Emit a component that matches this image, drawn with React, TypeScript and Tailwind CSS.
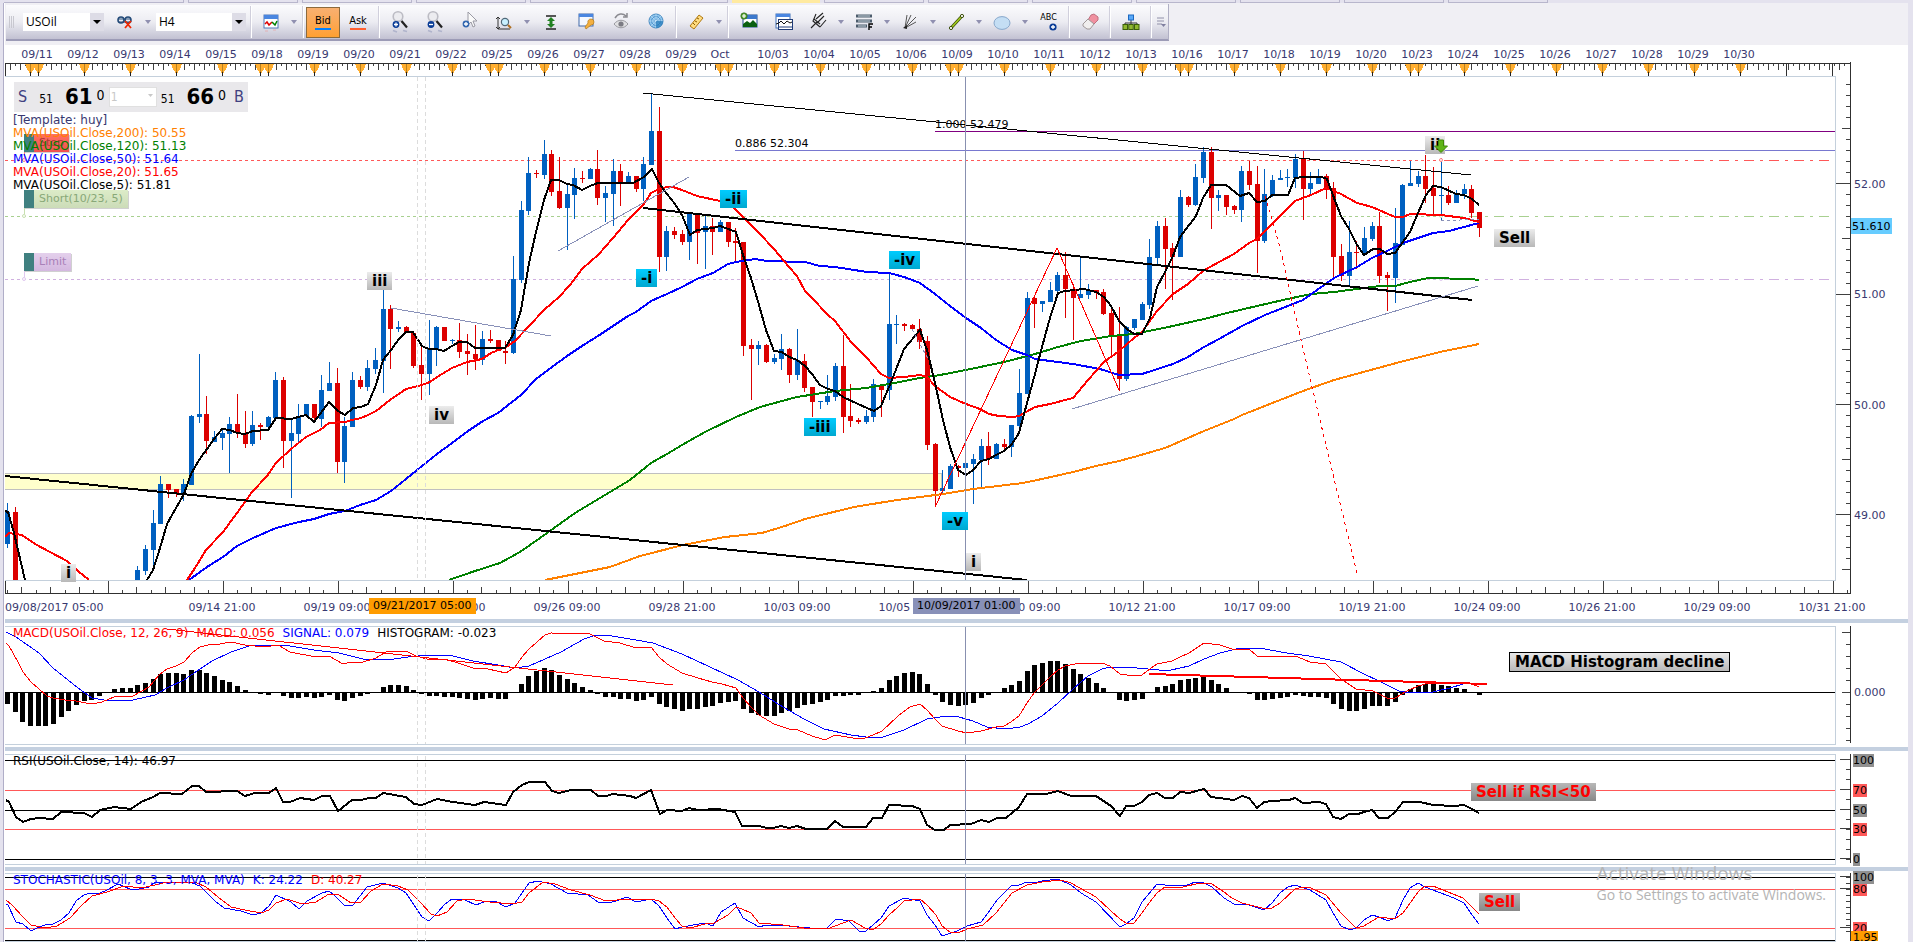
import { type ReactNode } from 'react';

type Candle = [number, number, number, number, number, 0 | 1];

// bar index, high, body top, body bottom, low, 1 = bullish
const candles: Candle[] = [
  [0, 503, 512, 544, 548, 1], [1, 507, 512, 590, 590, 0], [17, 566, 570, 585, 585, 1], [18, 545, 549, 571, 575, 1],
  [19, 510, 523, 550, 569, 1], [20, 476, 484, 524, 524, 1], [21, 484, 484, 490, 498, 0], [22, 489, 489, 493, 497, 0],
  [23, 479, 484, 493, 501, 1], [24, 415, 416, 485, 485, 1], [25, 354, 414, 417, 423, 1], [26, 396, 414, 441, 454, 0],
  [27, 431, 437, 442, 442, 1], [28, 428, 433, 438, 450, 1], [29, 417, 424, 434, 473, 1], [30, 394, 424, 433, 438, 0],
  [31, 411, 433, 444, 448, 0], [32, 411, 425, 444, 446, 1], [33, 423, 425, 427, 440, 0], [34, 416, 417, 427, 430, 1],
  [35, 372, 380, 418, 418, 1], [36, 377, 380, 441, 468, 0], [37, 418, 433, 441, 498, 1], [38, 404, 416, 434, 443, 1],
  [39, 404, 404, 416, 416, 1], [40, 404, 404, 418, 420, 0], [41, 375, 390, 419, 427, 1], [42, 362, 383, 391, 391, 1],
  [43, 368, 383, 462, 473, 0], [44, 417, 426, 462, 483, 1], [45, 372, 380, 427, 427, 1], [46, 376, 380, 387, 389, 0],
  [47, 360, 368, 387, 391, 1], [48, 348, 360, 369, 374, 1], [49, 290, 309, 361, 393, 1], [50, 305, 309, 329, 369, 0],
  [51, 321, 327, 329, 332, 1], [52, 326, 327, 333, 333, 0], [53, 332, 333, 366, 368, 0], [54, 347, 365, 374, 400, 0],
  [55, 320, 349, 374, 395, 1], [56, 326, 327, 349, 366, 1], [57, 327, 327, 341, 341, 0], [58, 339, 340, 341, 344, 1],
  [59, 323, 340, 352, 358, 0], [60, 334, 351, 354, 375, 0], [61, 325, 354, 359, 370, 0], [62, 331, 339, 360, 365, 1],
  [63, 330, 339, 341, 343, 0], [64, 340, 340, 351, 351, 0], [65, 341, 351, 353, 364, 0], [66, 256, 279, 353, 354, 1],
  [67, 201, 210, 280, 283, 1], [68, 157, 173, 211, 215, 1], [69, 170, 173, 174, 178, 0], [70, 140, 154, 175, 179, 1],
  [71, 150, 154, 192, 196, 0], [72, 157, 191, 208, 209, 0], [73, 185, 194, 208, 250, 1], [74, 168, 178, 195, 219, 1],
  [75, 171, 178, 179, 183, 0], [76, 168, 169, 179, 179, 1], [77, 150, 169, 198, 205, 0], [78, 186, 193, 198, 222, 1],
  [79, 159, 171, 194, 226, 1], [80, 164, 171, 183, 206, 0], [81, 172, 176, 183, 183, 1], [82, 176, 176, 189, 192, 0],
  [83, 157, 164, 189, 201, 1], [84, 93, 131, 165, 165, 1], [85, 107, 131, 257, 272, 0], [86, 226, 231, 257, 271, 1],
  [87, 227, 231, 235, 239, 0], [88, 230, 234, 242, 245, 0], [89, 213, 214, 242, 260, 1], [90, 214, 214, 233, 264, 0],
  [91, 216, 226, 232, 269, 1], [92, 218, 226, 232, 255, 0], [93, 220, 222, 232, 232, 1], [94, 222, 222, 242, 247, 0],
  [95, 228, 241, 243, 261, 0], [96, 242, 242, 346, 356, 0], [97, 339, 345, 349, 400, 0], [98, 341, 345, 349, 365, 1],
  [99, 344, 345, 362, 363, 0], [100, 354, 358, 362, 364, 1], [101, 334, 349, 359, 370, 1], [102, 348, 349, 375, 383, 0],
  [103, 329, 360, 375, 380, 1], [104, 354, 361, 388, 392, 0], [105, 387, 387, 402, 417, 0], [106, 401, 401, 402, 409, 1],
  [107, 375, 396, 402, 405, 1], [108, 363, 366, 397, 401, 1], [109, 335, 366, 417, 433, 0], [110, 384, 416, 421, 427, 0],
  [111, 418, 420, 422, 424, 0], [112, 410, 416, 422, 424, 1], [113, 379, 384, 417, 422, 1], [114, 384, 385, 390, 417, 0],
  [115, 274, 324, 390, 400, 1], [116, 315, 324, 325, 344, 1], [117, 323, 324, 326, 331, 0], [118, 324, 325, 329, 329, 0],
  [119, 319, 329, 342, 349, 0], [120, 336, 341, 445, 450, 0], [121, 443, 444, 491, 507, 0], [122, 470, 488, 491, 495, 1],
  [123, 464, 466, 489, 489, 1], [124, 465, 466, 468, 477, 0], [125, 463, 463, 468, 468, 1], [126, 454, 459, 464, 504, 1],
  [127, 439, 446, 460, 488, 1], [128, 432, 446, 459, 465, 0], [129, 443, 444, 459, 459, 1], [130, 439, 444, 447, 451, 0],
  [131, 425, 425, 447, 457, 1], [132, 369, 393, 426, 428, 1], [133, 292, 298, 394, 394, 1], [134, 295, 298, 304, 328, 0],
  [135, 301, 301, 304, 312, 1], [136, 282, 290, 302, 302, 1], [137, 272, 275, 291, 293, 1], [138, 252, 275, 289, 318, 0],
  [139, 284, 289, 298, 340, 0], [140, 257, 294, 298, 298, 1], [141, 284, 290, 295, 299, 1], [142, 290, 290, 292, 299, 0],
  [143, 289, 292, 314, 315, 0], [144, 306, 313, 335, 355, 0], [145, 307, 335, 379, 391, 0], [146, 326, 327, 379, 381, 1],
  [147, 319, 319, 328, 330, 1], [148, 302, 304, 320, 320, 1], [149, 239, 257, 305, 309, 1], [150, 221, 226, 258, 266, 1],
  [151, 218, 226, 249, 289, 0], [152, 243, 248, 257, 300, 0], [153, 190, 197, 257, 257, 1], [154, 196, 197, 205, 207, 0],
  [155, 164, 177, 205, 206, 1], [156, 147, 152, 178, 183, 1], [157, 147, 152, 198, 229, 0], [158, 190, 195, 198, 211, 1],
  [159, 195, 195, 207, 215, 0], [160, 205, 206, 210, 214, 0], [161, 166, 171, 210, 222, 1], [162, 161, 171, 185, 190, 0],
  [163, 166, 184, 241, 273, 0], [164, 169, 194, 241, 243, 1], [165, 175, 180, 195, 197, 1], [166, 170, 178, 180, 180, 1],
  [167, 169, 177, 178, 187, 1], [168, 154, 159, 178, 188, 1], [169, 151, 159, 189, 220, 0], [170, 172, 183, 189, 194, 1],
  [171, 169, 176, 184, 184, 1], [172, 174, 176, 190, 199, 0], [173, 182, 188, 257, 279, 0], [174, 244, 256, 276, 281, 0],
  [175, 221, 252, 276, 286, 1], [176, 241, 252, 253, 269, 0], [177, 227, 238, 253, 253, 1], [178, 222, 226, 239, 241, 1],
  [179, 212, 226, 276, 283, 0], [180, 272, 275, 278, 311, 0], [181, 208, 243, 278, 303, 1], [182, 184, 185, 245, 245, 1],
  [183, 161, 183, 186, 186, 1], [184, 171, 176, 184, 187, 1], [185, 155, 176, 189, 203, 0], [186, 167, 188, 196, 215, 0],
  [187, 158, 195, 196, 221, 1], [188, 186, 195, 203, 205, 0], [189, 190, 194, 203, 203, 1], [190, 184, 189, 194, 199, 1],
  [191, 185, 189, 213, 218, 0], [192, 212, 212, 228, 237, 0],
];

const histogram = [
  -11, -19, -29, -33, -33, -33, -31, -24, -18, -12, -8, -7, -3, 0, 4, 5, 5, 8, 10, 14, 19, 20, 20, 19, 23, 23, 20, 17, 13,
  11, 7, 3, 0, -1, -2, 0, -3, -5, -5, -4, -5, -4, -2, -7, -8, -5, -3, -1, 0, 6, 8, 8, 7, 3, -1, -3, -3, -4, -4, -5, -6, -7,
  -6, -5, -6, -6, 0, 9, 17, 22, 25, 23, 18, 14, 10, 6, 3, -1, -4, -4, -6, -6, -8, -7, -4, -11, -14, -16, -18, -16, -16,
  -14, -13, -10, -9, -8, -16, -20, -22, -23, -23, -20, -18, -15, -12, -11, -9, -7, -3, -3, -2, -2, 0, 2, 5, 13, 17, 20,
  21, 19, 9, -2, -9, -12, -13, -12, -10, -5, -2, 1, 5, 8, 12, 22, 28, 30, 32, 32, 29, 24, 19, 15, 10, 5, 0, -7, -8, -7,
  -6, 0, 6, 7, 9, 13, 14, 15, 17, 13, 9, 5, 0, 0, -1, -7, -7, -6, -5, -4, -2, -3, -4, -4, -5, -11, -16, -18, -18, -16,
  -13, -13, -13, -9, -2, 4, 8, 9, 9, 8, 7, 5, 4, 0, -2,
];

const mva5 = [
  '5,511 8,512 14,533 25,580',
  '147,580 153,570 160,548 167,524 176,508 184,494 191,474 199,460 207,449 214,439 222,429 230,430 237,433 245,434 253,431 268,430 276,418 291,419 306,415 314,422 329,402 338,411 345,415 353,408 361,407 368,404 376,385 383,360 391,350 399,339 406,332 413,332 422,346 429,349 436,349 444,351 452,346 459,342 467,342 475,348 505,348 513,335 521,310 529,263 536,232 544,200 551,180 559,180 567,184 573,185 582,190 590,186 598,183 633,183 644,177 652,169 659,183 667,194 675,204 682,215 690,235 697,230 713,228 720,226 728,229 736,232 743,255 751,278 759,305 766,330 774,351 782,352 789,357 797,360 805,366 812,374 820,385 828,389 835,391 843,397 858,404 874,411 881,406 889,387 897,367 904,349 920,330 927,350 935,383 943,420 950,447 958,470 966,475 973,470 981,461 989,459 996,455 1004,451 1012,444 1019,433 1027,403 1035,374 1042,347 1050,318 1058,293 1065,291 1084,289 1096,292 1104,297 1111,306 1119,321 1127,329 1134,334 1142,334 1150,318 1157,287 1165,272 1173,256 1180,237 1196,216 1203,198 1211,185 1226,185 1240,196 1249,193 1257,202 1265,201 1272,195 1288,195 1295,178 1303,177 1322,177 1327,179 1334,198 1341,216 1349,229 1357,245 1364,255 1373,249 1380,249 1387,254 1395,253 1410,232 1418,213 1426,195 1433,186 1441,187 1456,194 1464,195 1472,199 1479,205',
];
const mva20 = [
  '5,537 9,533 22,535 35,544 50,552 67,561 78,571 89,580',
  '187,580 195,568 206,550 223,532 237,513 252,492 267,476 276,463 291,449 306,437 320,430 329,423 345,422 352,420 361,418 368,415 376,411 390,400 406,389 422,385 430,382 437,377 452,368 467,362 482,359 491,353 506,347 515,341 529,326 544,310 559,297 570,285 582,269 598,255 613,238 628,220 636,212 644,204 651,193 659,189 667,187 673,187 682,190 697,196 720,201 733,207 743,217 759,233 774,249 789,267 797,276 805,291 812,298 828,315 835,321 851,342 866,357 881,374 889,378 904,377 920,375 927,377 935,386 950,397 966,404 980,409 989,414 999,416 1013,417 1019,416 1035,407 1050,404 1073,398 1088,380 1104,362 1119,351 1134,338 1142,332 1157,311 1173,294 1188,284 1203,271 1219,262 1234,254 1249,243 1257,239 1265,231 1280,216 1295,201 1311,195 1326,188 1341,194 1357,203 1372,207 1395,217 1403,217 1410,214 1441,215 1464,218 1479,222',
];
const mva50 =
  '189,580 207,567 223,557 237,546 253,538 276,528 299,522 314,519 329,514 345,511 360,505 376,500 391,491 406,479 422,466 437,454 452,443 468,431 483,421 498,413 521,395 536,379 552,367 567,356 582,346 598,336 613,326 628,316 636,312 651,301 667,294 682,287 697,279 713,273 728,264 736,262 755,259 767,261 805,262 820,266 835,267 867,272 889,273 904,277 920,283 935,294 950,306 966,318 981,328 996,340 1012,350 1027,355 1035,359 1073,364 1100,369 1119,375 1142,374 1173,364 1188,357 1204,347 1219,339 1242,326 1265,315 1303,300 1317,290 1334,278 1357,267 1372,258 1387,251 1403,243 1418,238 1433,233 1449,231 1479,223';
const mva120 =
  '449,580 475,571 500,563 520,552 540,538 575,513 610,492 630,480 651,463 667,454 682,445 705,432 736,417 760,407 782,401 797,397 835,391 866,388 889,384 920,378 940,375 966,370 1004,362 1035,354 1058,347 1081,341 1111,336 1134,334 1173,326 1204,319 1227,313 1257,306 1283,300 1311,294 1334,292 1380,286 1395,286 1410,282 1428,278 1470,279 1479,280';
const mva200 =
  '545,580 580,573 610,567 640,556 683,545 725,537 762,533 785,526 805,519 854,507 897,500 920,497 943,494 973,489 1023,483 1042,479 1073,472 1096,466 1119,461 1134,457 1165,448 1188,438 1204,431 1234,419 1242,415 1280,400 1303,391 1334,380 1367,371 1400,362 1440,352 1479,344';

const macdLine =
  '6,643 9,646 18,662 23,672 31,682 39,689 47,696 53,698 65,700 76,701 86,703 92,704 102,702 114,697 133,696 149,687 159,675 167,669 176,666 184,662 192,653 200,647 208,645 220,644 231,642 245,645 265,647 278,645 290,652 316,657 329,656 343,664 351,662 363,662 376,658 386,652 396,651 406,651 416,656 427,659 445,659 461,664 473,668 488,669 506,673 515,667 522,657 529,649 545,635 551,633 590,634 604,641 620,643 636,648 651,647 659,657 667,664 682,673 698,678 712,682 722,684 736,688 743,698 751,707 759,715 774,724 789,729 798,730 812,736 822,739 827,739 835,735 859,739 865,738 873,735 882,731 898,716 910,707 920,704 927,710 935,719 942,726 958,731 967,733 981,731 996,727 1004,726 1011,722 1019,716 1027,703 1034,693 1042,685 1050,677 1058,670 1065,666 1080,663 1102,663 1110,666 1120,674 1134,676 1142,675 1151,668 1157,664 1172,661 1180,657 1189,653 1204,643 1220,645 1232,649 1249,649 1257,656 1298,657 1310,662 1326,664 1341,679 1356,689 1373,691 1387,698 1395,698 1407,691 1418,686 1429,683 1455,683 1463,682 1470,683 1479,687';
const signalLine =
  '6,632 16,637 39,653 53,668 78,688 92,698 104,700 133,700 155,695 167,688 184,680 200,669 212,661 231,652 249,646 269,645 290,646 314,650 339,653 363,659 394,659 408,657 429,655 449,655 473,661 498,665 515,668 529,666 545,659 561,652 584,639 596,635 612,636 636,640 653,643 682,654 710,667 738,680 759,692 783,707 804,719 824,729 851,735 866,737 883,737 904,730 927,719 946,716 959,717 973,721 987,727 1006,729 1020,727 1028,724 1042,716 1058,703 1073,689 1088,676 1102,669 1110,667 1126,667 1159,670 1171,670 1189,666 1204,659 1220,653 1236,649 1246,648 1259,648 1287,653 1309,656 1341,662 1364,674 1379,681 1399,691 1412,693 1433,692 1450,688 1463,684';
const rsiLine =
  '6,800 9,802 16,817 23,822 31,819 39,818 53,819 61,812 84,813 92,817 100,810 114,807 131,809 141,802 153,797 160,793 182,794 192,786 199,786 206,792 237,791 245,796 255,793 269,793 276,788 283,802 290,802 300,798 314,800 322,796 330,796 338,811 352,800 361,800 369,798 376,798 383,793 406,797 414,804 422,805 437,799 453,802 475,805 484,802 506,805 513,792 522,785 529,782 545,782 552,791 559,793 571,790 591,790 598,796 606,796 613,794 630,796 636,798 651,790 660,814 667,810 682,811 689,808 698,810 718,809 735,812 742,826 759,826 767,828 773,828 781,826 789,828 797,826 806,829 827,829 835,821 843,827 866,827 873,818 882,818 889,805 912,806 920,809 927,825 935,830 944,830 950,825 971,824 981,820 989,822 997,818 1006,818 1019,807 1027,794 1046,794 1058,791 1071,796 1096,796 1111,806 1120,816 1126,806 1134,806 1142,802 1149,795 1157,793 1165,798 1173,798 1180,792 1189,793 1204,789 1211,797 1234,800 1242,796 1249,798 1257,808 1264,802 1272,801 1289,800 1295,798 1303,803 1319,802 1326,804 1333,817 1341,819 1349,814 1358,814 1364,812 1372,810 1379,818 1388,818 1395,812 1403,802 1420,802 1433,805 1454,806 1464,805 1472,809 1479,813';
const stochK =
  '6,904 8,905 16,922 23,924 31,931 37,928 45,925 53,924 61,920 69,913 76,901 84,895 90,893 100,893 107,890 118,884 130,889 139,889 149,887 155,882 176,882 192,883 200,886 215,901 224,908 241,911 253,915 261,913 269,906 276,895 291,902 299,909 307,901 322,893 329,891 335,896 345,906 353,905 367,887 383,883 398,888 406,893 414,905 422,917 429,921 437,913 445,904 452,899 465,900 476,905 486,901 495,901 506,907 515,903 522,893 529,883 538,881 551,884 567,893 588,895 598,902 608,903 616,901 627,897 636,902 651,899 659,906 667,918 675,929 682,927 705,923 713,926 721,912 735,903 743,918 759,927 766,925 789,926 820,929 827,928 836,919 849,921 859,931 866,931 881,918 889,906 904,898 920,901 927,915 935,925 942,936 957,931 967,926 981,922 988,913 997,900 1011,886 1019,885 1027,882 1034,883 1042,881 1058,879 1071,885 1081,893 1096,902 1120,927 1126,924 1134,918 1142,902 1157,884 1165,885 1185,886 1195,882 1204,883 1212,887 1224,898 1234,904 1249,905 1264,910 1272,903 1280,893 1288,887 1295,885 1310,890 1326,900 1333,913 1341,926 1350,930 1356,928 1364,920 1372,915 1379,917 1388,921 1395,918 1403,900 1410,888 1418,883 1425,887 1454,898 1464,903 1472,915 1479,924';
const stochD =
  '6,900 12,905 23,917 31,925 45,928 57,926 70,918 82,905 92,896 107,892 124,886 141,888 155,885 167,882 195,882 206,887 218,897 231,907 245,910 261,913 269,910 276,903 287,899 302,904 316,902 329,894 339,895 351,903 361,902 371,891 383,884 398,886 408,890 420,902 431,914 437,916 447,912 457,901 467,899 490,902 512,904 522,902 529,893 543,882 555,884 571,890 590,895 606,901 628,899 651,899 659,901 667,907 675,918 682,926 690,928 705,924 714,923 728,915 736,907 742,909 751,913 759,923 783,925 804,928 827,929 851,920 865,928 873,930 881,924 889,915 898,907 904,901 920,899 927,905 936,915 942,926 950,932 958,933 967,929 983,925 996,913 1012,893 1027,885 1042,882 1061,880 1071,883 1096,897 1111,911 1120,919 1126,923 1134,923 1142,913 1149,903 1157,893 1165,887 1183,887 1200,883 1212,884 1224,892 1232,898 1242,903 1266,909 1272,908 1280,903 1295,889 1303,887 1311,888 1326,895 1341,913 1356,928 1364,926 1379,917 1395,919 1403,913 1418,892 1425,886 1433,886 1463,898 1472,907 1479,914';

const dayLabels = [
  '09/11', '09/12', '09/13', '09/14', '09/15', '09/18', '09/19', '09/20', '09/21', '09/22', '09/25', '09/26', '09/27',
  '09/28', '09/29', 'Oct', '10/03', '10/04', '10/05', '10/06', '10/09', '10/10', '10/11', '10/12', '10/13', '10/16',
  '10/17', '10/18', '10/19', '10/20', '10/23', '10/24', '10/25', '10/26', '10/27', '10/28', '10/29', '10/30',
];
const timeLabels = [
  '09/14 21:00', '09/19 09:00', '09/21 21:00', '09/26 09:00', '09/28 21:00', '10/03 09:00', '10/05 21:00',
  '10/10 09:00', '10/12 21:00', '10/17 09:00', '10/19 21:00', '10/24 09:00', '10/26 21:00', '10/29 09:00', '10/31 21:00',
];

const LEFT = 5;
const barX = (i: number) => Math.round(7 + i * 7.667);
const range = (n: number) => Array.from({ length: n }, (_, i) => i);

/* ---------- toolbar ---------- */

function Icon({ children }: { children: ReactNode }) {
  return (
    <svg width="20" height="24" viewBox="0 0 20 24" fill="none" aria-hidden="true">
      {children}
    </svg>
  );
}

function Lens({ sign }: { sign: 'plus' | 'minus' }) {
  return (
    <Icon>
      <circle cx="8" cy="6.500" r="4.800" fill="#ececf0" stroke="#bcbcc4" strokeWidth="1.6" />
      <path d="M11.500 11l5.500 6.500" stroke="#222" strokeWidth="2.2" />
      <path d="M3 20.500l4 1.500M13 20.500l4 1" stroke="#8c94b8" strokeWidth="1.6" opacity=".5" />
      <circle cx="6" cy="14.500" r="3.400" fill="#0a3c96" />
      <path d={sign === 'plus' ? 'M4 14.500h4M6 12.500v4' : 'M4 14.500h4'} stroke="#fff" strokeWidth="1.3" />
    </Icon>
  );
}

function ToolButton({ label, children }: { label: string; children: ReactNode }) {
  return (
    <button aria-label={label} className="flex h-9 w-[35px] shrink-0 items-center justify-center">
      {children}
    </button>
  );
}

function SplitButton({ label, children }: { label: string; children: ReactNode }) {
  return (
    <div className="flex h-9 shrink-0">
      <button aria-label={label} className="flex w-[34px] items-center justify-center">
        {children}
      </button>
      <button aria-label={`${label} options`} className="flex w-3 items-center justify-center">
        <svg width="6" height="4" aria-hidden="true">
          <path d="M0 0h6L3 4z" fill="#9090b0" />
        </svg>
      </button>
    </div>
  );
}

function Sep() {
  return (
    <div className="flex h-8 w-[6px] shrink-0 justify-center">
      <div className="w-px bg-[#d0cfdc]" />
      <div className="w-px bg-white" />
    </div>
  );
}

function Combo({ label, value, className }: { label: string; value: string; className: string }) {
  return (
    <div className={`relative h-[18px] shrink-0 bg-white ${className}`}>
      <select
        aria-label={label}
        defaultValue={value}
        className="block h-full w-full appearance-none bg-transparent px-[3px] font-['Open_Sans',sans-serif] text-xs leading-none text-black"
      >
        <option>{value}</option>
      </select>
      <span className="pointer-events-none absolute inset-y-0 right-0 flex w-[14px] items-center justify-center bg-[#dddce6]">
        <svg width="8" height="4" aria-hidden="true">
          <path d="M0 0h8L4 4z" fill="#000" />
        </svg>
      </span>
    </div>
  );
}

function Toolbar() {
  return (
    <div className="bg-[#f0eff4] pb-1">
      <div className="ml-px flex h-9 w-fit items-center border-b-2 border-[#9c9bb6] bg-gradient-to-b from-[#fbfbfd] via-[#ececf2] to-[#c2c1d2]">
        <div className="flex w-[10px] justify-center gap-px">
          <i className="h-3 w-px bg-[#c8c8d0]" />
          <i className="h-3 w-px bg-[#c8c8d0]" />
          <i className="h-3 w-px bg-[#c8c8d0]" />
        </div>
        <Combo label="Instrument" value="USOil" className="ml-[7px] w-[81px]" />
        <div className="ml-1">
          <SplitButton label="Link">
            <Icon>
              <path d="M4 9h12M4 12h12" stroke="#234a78" strokeWidth="1" />
              <circle cx="6" cy="10" r="3" stroke="#234a78" strokeWidth="1.6" />
              <circle cx="13" cy="10" r="3" stroke="#234a78" strokeWidth="1.6" />
              <path d="M10 11l6 7M16 11l-6 7" stroke="#f02800" strokeWidth="1.8" />
            </Icon>
          </SplitButton>
        </div>
        <Combo label="Period" value="H4" className="mx-[2px] w-[90px]" />
        <Sep />
        <SplitButton label="Chart type">
          <Icon>
            <rect x="3" y="5" width="14" height="13" fill="#fff" stroke="#5078b8" />
            <path d="M3 5h14v4H3z" fill="#4a86e0" />
            <path d="M4 14l2-2 2 3 3-3" stroke="#e00000" strokeWidth="1.5" />
            <path d="M11 12l3 3 2-4" stroke="#008000" strokeWidth="1.5" />
            <path d="M4 21h3M12 20h3" stroke="#e8a0a0" opacity=".7" />
          </Icon>
        </SplitButton>
        <Sep />
        <button className="flex h-[31px] w-[34px] shrink-0 flex-col items-center justify-center gap-px border border-[#8c6a3c] bg-gradient-to-b from-[#f8b070] to-[#ffa030] font-['DejaVu_Sans_Condensed','DejaVu_Sans',sans-serif] text-[11px] leading-3 text-black">
          Bid
          <i className="h-[2px] w-4 bg-[#0080ff]" />
        </button>
        <button className="flex h-[31px] w-9 shrink-0 flex-col items-center justify-center gap-px font-['DejaVu_Sans_Condensed','DejaVu_Sans',sans-serif] text-[11px] leading-3 text-black">
          Ask
          <i className="h-[2px] w-4 bg-[#ff6030]" />
        </button>
        <Sep />
        <ToolButton label="Zoom in">
          <Lens sign="plus" />
        </ToolButton>
        <ToolButton label="Zoom out">
          <Lens sign="minus" />
        </ToolButton>
        <ToolButton label="Cursor">
          <Icon>
            <path d="M8 2v13l3-3 2 5 2-1-2-5h4z" fill="#fafafa" stroke="#9a9aa4" />
            <circle cx="6" cy="14" r="3.4" fill="#3468b0" />
            <path d="M4 14h4M6 12v4" stroke="#fff" strokeWidth="1.3" />
          </Icon>
        </ToolButton>
        <SplitButton label="Scale">
          <Icon>
            <path d="M4 7v12M2 9l2-2 2 2M2 17l2 2 2-2M4 19h12" stroke="#333" />
            <circle cx="11" cy="12" r="3.6" fill="#c8f0ff" stroke="#506878" strokeWidth="1.2" />
            <path d="M14 15l3 3" stroke="#b07020" strokeWidth="2" />
          </Icon>
        </SplitButton>
        <ToolButton label="Fit vertically">
          <Icon>
            <path d="M5 6h10M5 19h10" stroke="#222" strokeWidth="1.6" />
            <path d="M10 7l4 4h-2.500v3H14l-4 4-4-4h2.500v-3H6z" fill="#208020" />
          </Icon>
        </ToolButton>
        <ToolButton label="Chart properties">
          <Icon>
            <rect x="3" y="4" width="14" height="12" fill="#f4f8ff" stroke="#4068a8" />
            <path d="M3 4h14v3H3z" fill="#4a86e0" />
            <path d="M15 9a3 3 0 0 1 0 6l-5 4-1-2 3-4a3 3 0 0 1 3-4z" fill="#f4b040" stroke="#b07818" strokeWidth=".7" />
          </Icon>
        </ToolButton>
        <ToolButton label="Show or hide">
          <Icon>
            <path d="M4 8c3-5 8-5 11-2M16 3v4h-4" stroke="#8a8a90" strokeWidth="1.5" />
            <path d="M3 14c4-5 10-5 14 0-4 5-10 5-14 0z" fill="#e0e0e2" stroke="#9a9aa0" />
            <circle cx="10" cy="14" r="2.6" fill="#7c7c84" />
          </Icon>
        </ToolButton>
        <ToolButton label="Web">
          <Icon>
            <circle cx="10" cy="11" r="7" fill="#8cc4ec" stroke="#4488c0" />
            <circle cx="10" cy="11" r="4.500" stroke="#3c84c4" strokeWidth=".8" />
            <circle cx="10" cy="11" r="2" stroke="#3c84c4" strokeWidth=".8" />
            <path d="M10 4v14M3 11h14M5 6l10 10M15 6L5 16" stroke="#c8e4f8" strokeWidth=".6" />
            <path d="M10 11V18a7 7 0 0 0 7-7z" fill="#2078b8" opacity=".7" />
          </Icon>
        </ToolButton>
        <Sep />
        <SplitButton label="Measure">
          <Icon>
            <path d="M13 5l4 3-9 11-4-3z" fill="#ffdc80" stroke="#b07810" />
            <path d="M11 8l2 1M9 11l2 1M7 13l2 2" stroke="#8c5c00" />
          </Icon>
        </SplitButton>
        <Sep />
        <ToolButton label="Add indicator">
          <Icon>
            <rect x="4" y="5" width="14" height="12" fill="#fff" stroke="#204c90" />
            <path d="M4 5h14v4H4z" fill="#3c78cc" />
            <path d="M4 17v-3l4-3 3 2 3-3 4 4v3z" fill="#0a6010" />
            <circle cx="5" cy="6" r="3.2" fill="#58a030" stroke="#206010" strokeWidth=".6" />
            <path d="M3 6h4M5 4v4" stroke="#fff" strokeWidth="1.2" />
          </Icon>
        </ToolButton>
        <ToolButton label="Indicator windows">
          <Icon>
            <rect x="2" y="4" width="14" height="14" fill="#fff" stroke="#4070b8" />
            <path d="M2 4h14v3H2z" fill="#4a86e0" />
            <rect x="4.500" y="9.500" width="14" height="10" fill="#fff" stroke="#203c78" />
            <path d="M2 14l3-1 2-2 3 3 3-3 3 2 2-1" stroke="#111" />
            <path d="M5 17h13" stroke="#203c78" />
          </Icon>
        </ToolButton>
        <SplitButton label="Pitchfork">
          <Icon>
            <path d="M3 18L9 12M8 4l-3 7 7 6M8 9l7-6M9 13l7-7M12 17l6-7M6 9l6 5" stroke="#222" strokeWidth="1.1" />
          </Icon>
        </SplitButton>
        <SplitButton label="Fibonacci">
          <Icon>
            <path d="M2 6h16M2 11h16M2 16h11" stroke="#4c5c6c" strokeWidth="3" />
            <path d="M4 6h12M4 11h12M4 16h8" stroke="#c8d4dc" strokeWidth="1" />
            <path d="M15 20v-6h4M15 17h3" stroke="#000" strokeWidth="1.4" />
          </Icon>
        </SplitButton>
        <SplitButton label="Fan">
          <Icon>
            <path d="M5 18l2-13M5 18l6-13M5 18L16 7M5 18l11-6" stroke="#555" />
            <path d="M3 18l4-3v4z" fill="#222" />
          </Icon>
        </SplitButton>
        <SplitButton label="Line">
          <Icon>
            <path d="M5 18L16 6" stroke="#384c08" strokeWidth="3" />
            <path d="M5 18L16 6" stroke="#a4cc20" strokeWidth="1.6" />
            <circle cx="16" cy="6" r="1.600" fill="#fff" stroke="#384c08" />
            <circle cx="5" cy="18" r="1.600" fill="#fff" stroke="#384c08" />
          </Icon>
        </SplitButton>
        <SplitButton label="Ellipse">
          <Icon>
            <ellipse cx="10" cy="13" rx="8" ry="6.400" fill="#c4def4" stroke="#88a8cc" />
          </Icon>
        </SplitButton>
        <button className="flex h-9 w-[35px] shrink-0 flex-col items-center justify-center font-['DejaVu_Sans_Condensed','DejaVu_Sans',sans-serif] text-[9px] leading-[9px] text-black">
          ABC
          <svg width="10" height="10" className="ml-2" aria-hidden="true">
            <circle cx="5" cy="5" r="3.600" fill="#0a3c96" />
            <path d="M3 5h4M5 3v4" stroke="#fff" strokeWidth="1.300" />
          </svg>
        </button>
        <Sep />
        <ToolButton label="Erase">
          <Icon>
            <path d="M11 5l3-1 4 3v3l-4 4-6-4z" fill="#f090a0" stroke="#c07080" />
            <path d="M8 9l6 5-4 5H7l-4-3v-2z" fill="#f0eeee" stroke="#a09898" />
          </Icon>
        </ToolButton>
        <Sep />
        <ToolButton label="Objects tree">
          <Icon>
            <path d="M10 8v7M4 15v-2h12v2" stroke="#333" />
            <rect x="7.500" y="5" width="5" height="5" fill="#58a8f8" stroke="#1c68c0" />
            <rect x="2" y="14.500" width="4.500" height="5" fill="#90b830" stroke="#3c6008" />
            <rect x="7.750" y="14.500" width="4.500" height="5" fill="#90b830" stroke="#3c6008" />
            <rect x="13.500" y="14.500" width="4.500" height="5" fill="#90b830" stroke="#3c6008" />
          </Icon>
        </ToolButton>
        <Sep />
        <button aria-label="More tools" className="flex h-9 w-[15px] items-center justify-center border-r border-[#b0afc4]">
          <svg width="10" height="12" aria-hidden="true">
            <path d="M1 2h7M1 5h7M1 8h5" stroke="#9090a8" />
            <path d="M5 8h5l-2.500 3z" fill="#8080a0" />
          </svg>
        </button>
      </div>
    </div>
  );
}

/* ---------- chart pieces ---------- */

const axisText = "font-['DejaVu_Sans',sans-serif] text-[11px]";
const legendText = "font-['DejaVu_Sans',sans-serif] text-xs leading-[13px]";

function DayRuler() {
  const weekends = [30, 260, 490, 720, 950, 1180, 1410];
  const days = dayLabels.map((_, i) => (i === 15 ? 728 : 38 + i * 46));
  return (
    <svg className={`block h-[31px] w-full ${axisText}`} shapeRendering="crispEdges">
      <g transform={`translate(${-LEFT},-45)`}>
        {range(361).map((i) => (
          <path key={i} d={`M${Math.round(10 + i * 5.11)}.5 63v${i % 2 ? 3 : 7}`} stroke="#404040" />
        ))}
        {[...weekends, ...days].map((x) => (
          <g key={x}>
            <path d={`M${x - 5} 64h11l-2 5-3.500 5-3.500-5z`} fill="#ffae30" />
            <path d={`M${x + 0.5} 64v8`} stroke="#b88020" />
            <path d={`M${x + 0.5} 72v4`} stroke="#202020" />
          </g>
        ))}
        <path d="M5.500 63v14M1786.500 63v13M1832.500 63v13" stroke="#303030" />
        {dayLabels.map((d, i) => (
          <text key={d} x={i === 15 ? 720 : 37 + i * 46} y="58" textAnchor="middle" fill="#383870">
            {d}
          </text>
        ))}
      </g>
      <line x1="0" y1="18.500" x2="100%" y2="18.500" stroke="#303030" />
    </svg>
  );
}

function TimeAxis() {
  return (
    <div className="relative mr-[57px]">
      <svg className={`block h-[38px] w-full overflow-visible ${axisText}`} shapeRendering="crispEdges">
        <g transform={`translate(${-LEFT},-581)`}>
          {range(129).map((i) => (
            <path
              key={i}
              d={`M${Math.round(7 + i * 14.375)}.5 593v${(i - 7) % 8 === 0 ? -12 : i % 2 ? -6 : -3}`}
              stroke="#404040"
            />
          ))}
          <path d="M5.500 581v13" stroke="#303030" />
          <text x="5" y="611" fill="#383870">
            09/08/2017 05:00
          </text>
          {timeLabels.map((t, i) => (
            <text key={t} x={222 + i * 115} y="611" textAnchor="middle" fill="#383870">
              {t}
            </text>
          ))}
        </g>
        <line x1="0" y1="12.500" x2="100%" y2="12.500" stroke="#303030" />
      </svg>
      <span className={`absolute top-[17px] left-[364px] bg-[#ff9c00] px-1 leading-4 whitespace-nowrap text-black ${axisText}`}>
        09/21/2017 05:00
      </span>
      <span className={`absolute top-[17px] left-[908px] bg-[#8890b8] px-1 leading-4 whitespace-nowrap text-black ${axisText}`}>
        10/09/2017 01:00
      </span>
    </div>
  );
}

function Guides() {
  return (
    <g shapeRendering="crispEdges">
      <path d="M417.500 0V1000M425.500 0V1000" stroke="#dcdcdc" strokeDasharray="4 3" />
      <path d="M965.500 0V1000" stroke="#8890b0" />
    </g>
  );
}

function Pane({ top, height, axis, children, overlay }: {
  top: number;
  height: string;
  axis: ReactNode;
  children: ReactNode;
  overlay?: ReactNode;
}) {
  return (
    <section className="flex">
      <div className="relative min-w-0 flex-1 border-y border-r border-[#c4d0dc]">
        <svg className={`block w-full overflow-hidden ${height} ${axisText}`}>
          <g transform={`translate(${-LEFT},${-top})`}>
            {children}
            <Guides />
          </g>
        </svg>
        {overlay}
      </div>
      <div className="w-[72px] shrink-0">
        <svg className={`block w-full overflow-visible ${height} ${axisText}`} shapeRendering="crispEdges">
          <g transform={`translate(-1836,${-top})`}>{axis}</g>
        </svg>
      </div>
    </section>
  );
}

function Splitter() {
  return <div className="h-[4px] bg-[#c4d0e0]" />;
}

type NoteProps = { x: number; y: number; top: number; tone?: string; children: ReactNode };

function Note({ x, y, top, tone = 'from-[#ececec] to-[#b8b8b8] text-black', children }: NoteProps) {
  return (
    <span
      className={`absolute bg-gradient-to-b px-[5px] font-['DejaVu_Sans',sans-serif] text-[15px] leading-[18px] font-bold whitespace-nowrap ${tone}`}
      style={{ left: x - LEFT, top: y - top }}
    >
      {children}
    </span>
  );
}

const cyan = 'from-[#00ccff] to-[#00a8d0] text-black';

function Quote({ side, whole, pips }: { side: string; whole: string; pips: string }) {
  return (
    <span className="flex items-center gap-3 text-black">
      {side === 'S' && <b className="text-base font-normal text-[#404080]">S</b>}
      <span className="pt-1 text-xs">{whole}</span>
      <span className="flex items-start gap-1">
        <b className="text-[22px] leading-7">{pips}</b>
        <sup className="top-0 pt-1 text-sm leading-4">0</sup>
      </span>
      {side === 'B' && <b className="-ml-1 text-base font-normal text-[#404080]">B</b>}
    </span>
  );
}

const tags = [
  { text: 'Stop', y: 134, body: 'from-[#ff7060] to-[#f05050] text-[#b03838]' },
  { text: 'Short(10/23, 5)', y: 190, body: 'from-[#dcecc8] to-[#ccdcb8] text-[#88a878]' },
  { text: 'Limit', y: 253, body: 'from-[#e4d0ec] to-[#d4b8e0] text-[#a880b8]' },
];

function PriceOverlay() {
  const top = 77;
  return (
    <>
      {tags.map((t) => (
        <div
          key={t.text}
          className={`absolute left-[19px] flex bg-gradient-to-b shadow-[1px_1px_0_#d0d0d0] ${t.body} ${axisText}`}
          style={{ top: t.y - top }}
        >
          <i className="w-[10px] bg-[#408080]" />
          <span className="px-[5px] leading-[18px]">{t.text}</span>
        </div>
      ))}
      <div className="absolute top-[5px] left-[9px] flex h-[30px] w-[234px] items-center justify-between bg-[#e9e8eb] px-1 font-['DejaVu_Sans_Condensed','DejaVu_Sans',sans-serif]">
        <button>
          <Quote side="S" whole="51" pips="61" />
        </button>
        <select
          aria-label="Amount"
          className="h-5 w-12 appearance-none border border-[#e0e0e0] bg-white px-px text-xs leading-none text-[#c8c8c8]"
        >
          <option>1</option>
        </select>
        <button>
          <Quote side="B" whole="51" pips="66" />
        </button>
        <svg className="absolute top-3 left-[134px]" width="5" height="3" aria-hidden="true">
          <path d="M0 0h5L2.500 3z" fill="#c8c8c8" />
        </svg>
      </div>
      <div className={`absolute top-[37px] left-2 text-[#383870] ${legendText}`}>
        <p>[Template: huy]</p>
        <p className="text-[#ff8000]">MVA(USOil.Close,200): 50.55</p>
        <p className="text-[#008000]">MVA(USOil.Close,120): 51.13</p>
        <p className="text-[#0000ff]">MVA(USOil.Close,50): 51.64</p>
        <p className="text-[#ff0000]">MVA(USOil.Close,20): 51.65</p>
        <p className="text-black">MVA(USOil.Close,5): 51.81</p>
      </div>
      <Note x={367} y={272} top={top}>iii</Note>
      <Note x={61} y={564} top={top}>i</Note>
      <Note x={429} y={406} top={top}>iv</Note>
      <Note x={636} y={269} top={top} tone={cyan}>-i</Note>
      <Note x={720} y={190} top={top} tone={cyan}>-ii</Note>
      <Note x={804} y={418} top={top} tone={cyan}>-iii</Note>
      <Note x={889} y={251} top={top} tone={cyan}>-iv</Note>
      <Note x={942} y={512} top={top} tone={cyan}>-v</Note>
      <Note x={966} y={553} top={top}>i</Note>
      <Note x={1425} y={136} top={top}>ii</Note>
      <Note x={1494} y={229} top={top}>Sell</Note>
      <svg className="absolute top-[62px] left-[1429px]" width="14" height="14" aria-hidden="true">
        <path d="M4.500 1h5v6h4L7 13.500.5 7h4z" fill="#60b418" stroke="#408808" />
      </svg>
    </>
  );
}

function PricePlot() {
  return (
    <>
      <g shapeRendering="crispEdges">
        <rect x="4.500" y="473.500" width="937" height="16" fill="#ffffcc" stroke="#c0c0c0" />
        <path d="M935 131.500H4000" stroke="#800080" />
        <path d="M735 150.500H4000" stroke="#7878d0" />
        {[
          [160.5, '#ff5858'],
          [216.5, '#a8d090'],
          [279.5, '#d0b0e0'],
        ].map(([y, color]) => (
          <g key={y} stroke={color as string}>
            <path d={`M5 ${y}H1440`} strokeDasharray="3 3" />
            <path d={`M1444 ${y}H4000`} strokeDasharray="10 6 3 6" />
          </g>
        ))}
        {candles.map(([i, high, bodyTop, bodyBottom, low, up]) => (
          <g key={i} fill={up ? '#0060c0' : '#dc0000'}>
            <rect x={barX(i)} y={high} width="1" height={low - high} />
            <rect x={barX(i) - 2} y={bodyTop} width="5" height={Math.max(bodyBottom - bodyTop, 1)} />
          </g>
        ))}
      </g>
      {[160, 216, 279].map((y) => (
        <g key={y} fill="#fff" stroke={y === 160 ? '#ff8080' : y === 216 ? '#c8e0b0' : '#e0c8f0'}>
          <circle cx="1441" cy={y} r="1.500" />
          <circle cx="24" cy={y} r="1.500" />
          <path d={`M24.500 ${y - 8}v6`} />
        </g>
      ))}
      <g fill="none" strokeWidth="2" shapeRendering="crispEdges">
        <polyline points={mva200} stroke="#ff8000" />
        <polyline points={mva120} stroke="#008000" />
        <polyline points={mva50} stroke="#0000ff" />
        {mva20.map((p) => (
          <polyline key={p} points={p} stroke="#ff0000" />
        ))}
        {mva5.map((p) => (
          <polyline key={p} points={p} stroke="#000" />
        ))}
        <path d="M5 476L1027 580M643 208L1472 300" stroke="#000" />
        <path d="M643 93L1471 175" stroke="#000" strokeWidth="1" />
        <path d="M391 308L551 336M558 251L689 177M1072 409L1478 286" stroke="#8890b8" strokeWidth="1" />
        <path d="M912 329L928 359M1441 221L1479 219" stroke="#8890b8" strokeWidth="1" strokeDasharray="3 3" />
        <path d="M935 507L1057 248L1119 390" stroke="#ff0000" strokeWidth="1" />
        <path d="M1265 196L1280 247Q1300 340 1358 577" stroke="#ff0000" strokeWidth="1" strokeDasharray="3 4" />
      </g>
      <text x="935" y="128">1.000 52.479</text>
      <text x="735" y="147">0.886 52.304</text>
    </>
  );
}

function PriceAxis() {
  return (
    <>
      <path d="M1850.500 63V594" stroke="#303030" />
      {range(45).map((i) => (
        <path
          key={i}
          d={`M1850 ${Math.round(85 + i * 11.03)}.5h${i % 10 === 9 ? -14 : i % 5 === 4 ? -8 : -4}`}
          stroke="#404040"
        />
      ))}
      {['52.00', '51.00', '50.00', '49.00'].map((p, i) => (
        <text key={p} x="1854" y={Math.round(189 + i * 110.4)} fill="#383870">
          {p}
        </text>
      ))}
      <rect x="1851" y="219" width="41" height="16" fill="#66ccff" />
      <text x="1852" y="231">51.610</text>
    </>
  );
}

const levelColors: Record<string, string> = { '100': '#909090', '50': '#909090', '0': '#909090' };

function Level({ value, y }: { value: string; y: number }) {
  return (
    <>
      <path d={`M1850 ${y}.5h-10`} stroke="#404040" />
      <rect x="1853" y={y - 5} width={value.length * 7} height="13" fill={levelColors[value] ?? '#ff5858'} />
      <text x="1853" y={y + 5} fill="#000">
        {value}
      </text>
    </>
  );
}

export default function App() {
  return (
    <div className="min-h-screen overflow-hidden bg-[#e4e2ee]">
      <div className="flex h-[3px] gap-1 bg-[#e4e2ee] pl-1">
        <i className="w-[180px] border-r border-b border-[#b8b6cc]" />
        <i className="w-[110px] border-x border-b border-[#b8b6cc]" />
        <i className="w-[110px] border-x border-b border-[#b8b6cc]" />
        <i className="w-[110px] border-x border-b border-[#b8b6cc]" />
        <i className="w-[98px] border-x border-b border-[#b8b6cc]" />
        <i className="w-[96px] border-x border-b border-[#b8b6cc]" />
        <i className="w-[88px] bg-[#ffeaa0]" />
        {range(7).map((i) => (
          <i key={i} className="w-[100px] border-x border-b border-[#b8b6cc]" />
        ))}
      </div>
      <main className="mr-[5px] ml-[3px] border-l border-[#b0aec8] bg-white pl-px">
        <div className="h-[2px] bg-[#f0eff4]" />
        <Toolbar />

        <div className="mr-[57px]">
          <DayRuler />
        </div>
        <Pane top={77} height="h-[503px]" axis={<PriceAxis />} overlay={<PriceOverlay />}>
          <PricePlot />
        </Pane>
        <TimeAxis />
        <Splitter />

        <div className="pt-[3px] pb-[2px]">
          <Pane
            top={627}
            height="h-[117px]"
            axis={
              <>
                <path d="M1850.500 627V744" stroke="#303030" />
                {range(10).map((i) => (
                  <path key={i} d={`M1850 ${633 + i * 12}.5h${i % 5 === 0 ? -8 : -4}`} stroke="#404040" />
                ))}
                <text x="1854" y="697" fill="#383870">0.000</text>
              </>
            }
            overlay={
              <>
                <p className={`absolute top-0 left-2 flex gap-2 text-[#ff0000] ${legendText}`}>
                  <span>MACD(USOil.Close, 12, 26, 9)</span>
                  <span>MACD: 0.056</span>
                  <span className="text-[#0000ff]">SIGNAL: 0.079</span>
                  <span className="text-black">HISTOGRAM: -0.023</span>
                </p>
                <Note x={1509} y={652} top={627} tone="from-[#e8e8e8] to-[#b8b8b8] border border-black text-black">
                  MACD Histogram decline
                </Note>
              </>
            }
          >
            <g shapeRendering="crispEdges" fill="none">
              <path d="M5 692.500H4000" stroke="#000" />
              {histogram.map((h, i) => (
                <rect key={i} x={barX(i) - 2} y={h > 0 ? 693 - h : 693} width="5" height={Math.abs(h)} fill="#000" />
              ))}
              <polyline points={signalLine} stroke="#0000ff" />
              <polyline points={macdLine} stroke="#ff0000" />
              <path d="M167 629L673 685" stroke="#ff0000" />
              <path d="M1149 674L1487 684" stroke="#ff0000" strokeWidth="2" />
            </g>
          </Pane>
        </div>
        <Splitter />

        <div className="pt-[3px] pb-[2px]">
          <Pane
            top={755}
            height="h-[109px]"
            axis={
              <>
                <path d="M1850.500 755V864" stroke="#303030" />
                {range(11).map((i) => (
                  <path key={i} d={`M1850 ${760 + i * 10}h-4`} stroke="#404040" />
                ))}
                <Level value="100" y={760} />
                <Level value="70" y={790} />
                <Level value="50" y={810} />
                <Level value="30" y={829} />
                <Level value="0" y={859} />
              </>
            }
            overlay={
              <>
                <p className={`absolute top-0 left-2 text-black ${legendText}`}>RSI(USOil.Close, 14): 46.97</p>
                <Note x={1471} y={783} top={755} tone="from-[#b8b8b8] to-[#888888] text-[#ff0000]">
                  Sell if RSI&lt;50
                </Note>
              </>
            }
          >
            <g shapeRendering="crispEdges" fill="none">
              <path d="M5 760.500H4000M5 810.500H4000M5 859.500H4000" stroke="#000" />
              <path d="M5 790.500H4000M5 829.500H4000" stroke="#ff5858" />
              <polyline points={rsiLine} stroke="#000" strokeWidth="2" />
            </g>
          </Pane>
        </div>
        <Splitter />

        <div className="relative pt-[2px]">
          <Pane
            top={874}
            height="h-[67px]"
            axis={
              <>
                <path d="M1850.500 874V942" stroke="#303030" />
                {range(10).map((i) => (
                  <path key={i} d={`M1850 ${878 + i * 6}h-4`} stroke="#404040" />
                ))}
                <Level value="80" y={889} />
                <Level value="100" y={877} />
                <Level value="20" y={928} />
                <rect x="1851" y="932" width="27" height="10" fill="#ff9c00" />
                <text x="1853" y="942">1.95</text>
              </>
            }
            overlay={
              <>
                <p className={`absolute top-0 left-2 flex gap-2 text-[#0000ff] ${legendText}`}>
                  <span>STOCHASTIC(USOil, 8, 3, 3, MVA, MVA)</span>
                  <span>K: 24.22</span>
                  <span className="text-[#ff0000]">D: 40.27</span>
                </p>
                <Note x={1479} y={893} top={874} tone="from-[#b8b8b8] to-[#888888] text-[#ff0000]">
                  Sell
                </Note>
              </>
            }
          >
            <g shapeRendering="crispEdges" fill="none">
              <path d="M5 877.500H4000M5 940.500H4000" stroke="#000" />
              <path d="M5 889.500H4000M5 928.500H4000" stroke="#ff5858" />
              <polyline points={stochK} stroke="#0000ff" />
              <polyline points={stochD} stroke="#ff0000" />
            </g>
          </Pane>
          <div className="pointer-events-none absolute right-[82px] bottom-[37px] font-['Open_Sans',sans-serif] text-[#b4b4b4]">
            <p className="text-[19px] leading-6">Activate Windows</p>
            <p className="text-sm leading-5">Go to Settings to activate Windows.</p>
          </div>
        </div>
      </main>
    </div>
  );
}
